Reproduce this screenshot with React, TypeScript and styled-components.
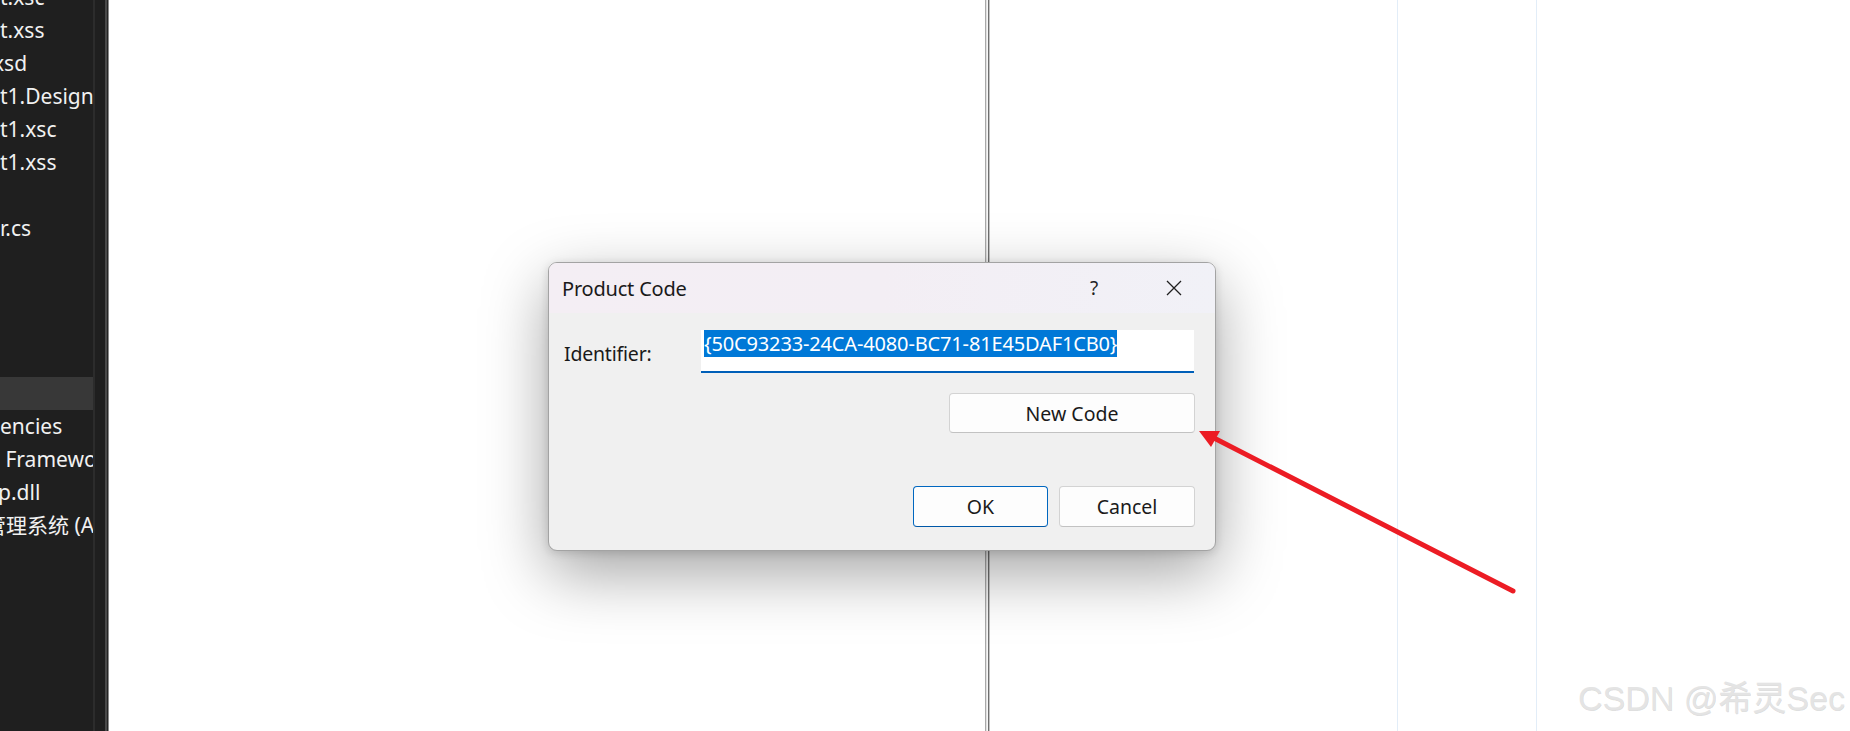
import React from 'react';
import styled, { createGlobalStyle } from 'styled-components';

const GlobalStyle = createGlobalStyle`
  html, body {
    margin: 0;
    padding: 0;
    background: #ffffff;
    overflow: hidden;
  }
`;

const Screen = styled.div`
  position: relative;
  display: flex;
  width: 1850px;
  height: 731px;
  overflow: hidden;
  background: #ffffff;
  font-family: "Noto Sans", "Noto Sans CJK SC", sans-serif;
`;

/* ---------- solution explorer strip on the left ---------- */

const Sidebar = styled.div`
  display: flex;
  flex-shrink: 0;
  height: 100%;
  background: #1f1f1f;
`;

const TreePane = styled.div`
  width: 93px;
  overflow: hidden;
  display: flex;
  flex-direction: column;
  margin-top: -19px;
`;

const TreeRow = styled.div<{ $active?: boolean; $shift?: number }>`
  height: 33px;
  line-height: 33px;
  flex-shrink: 0;
  white-space: nowrap;
  font-size: 21px;
  color: #f1f1f1;
  background: ${p => (p.$active ? '#383838' : 'transparent')};
  text-indent: ${p => p.$shift ?? 0}px;
`;

const Strip = styled.div<{ $w: number; $c: string }>`
  width: ${p => p.$w}px;
  background: ${p => p.$c};
`;

/* ---------- designer canvas ---------- */

const Canvas = styled.div`
  flex: 1;
  display: flex;
  height: 100%;
`;

const Blank = styled.div<{ $w?: number }>`
  ${p => (p.$w ? `width: ${p.$w}px; flex-shrink: 0;` : 'flex: 1;')}
`;

const Rule = styled.div<{ $c: string }>`
  width: 1px;
  flex-shrink: 0;
  background: ${p => p.$c};
`;

/* ---------- dialog ---------- */

const Dialog = styled.div`
  position: absolute;
  left: 548px;
  top: 262px;
  width: 668px;
  height: 289px;
  box-sizing: border-box;
  border: 1px solid #a3a3a3;
  border-radius: 9px;
  overflow: hidden;
  background: #f0f0f0;
  box-shadow: 0 22px 64px rgba(0, 0, 0, 0.36), 0 2px 10px rgba(0, 0, 0, 0.14);
  display: flex;
  flex-direction: column;
  color: #1a1a1a;
`;

const TitleBar = styled.div`
  height: 50px;
  flex-shrink: 0;
  display: flex;
  align-items: center;
  padding-left: 13px;
  background: linear-gradient(90deg, #f4eef4 0%, #f3eef4 50%, #f1f1f7 100%);
`;

const Title = styled.div`
  flex: 1;
  font-size: 20px;
  letter-spacing: -0.2px;
`;

const CaptionButton = styled.div<{ $w: number }>`
  width: ${p => p.$w}px;
  height: 50px;
  display: flex;
  align-items: center;
  justify-content: center;
  font-size: 19px;
  color: #1f1f1f;
`;

const Body = styled.div`
  flex: 1;
  display: flex;
  flex-direction: column;
  padding: 17px 20px 23px 15px;
`;

const FieldRow = styled.div`
  display: flex;
  align-items: center;
`;

const Label = styled.div`
  width: 137px;
  flex-shrink: 0;
  font-size: 19.5px;
  letter-spacing: -0.2px;
  padding-top: 4px;
`;

const TextBox = styled.div`
  width: 493px;
  height: 43px;
  box-sizing: border-box;
  background: #ffffff;
  border-bottom: 2px solid #005fb8;
  padding: 0 0 0 3px;
  display: flex;
  align-items: flex-start;
`;

const Selected = styled.span`
  background: #0078d7;
  color: #ffffff;
  font-size: 20px;
  line-height: 27px;
  height: 27px;
  letter-spacing: -0.15px;
  white-space: nowrap;
`;

const ButtonRow = styled.div<{ $top: number }>`
  display: flex;
  justify-content: flex-end;
  gap: 11px;
  margin-top: ${p => p.$top}px;
`;

const Button = styled.div<{ $w: number; $primary?: boolean }>`
  width: ${p => p.$w}px;
  height: ${p => (p.$primary !== undefined ? 41 : 40)}px;
  box-sizing: border-box;
  display: flex;
  align-items: center;
  justify-content: center;
  background: #fdfdfd;
  border: 1px solid ${p => (p.$primary ? '#0067c0' : '#d3d3d3')};
  border-bottom-color: ${p => (p.$primary ? '#0058a8' : '#c2c2c2')};
  border-radius: 4px;
  font-size: 19.5px;
  color: #1a1a1a;
`;

/* ---------- overlays ---------- */

const Overlay = styled.svg`
  position: absolute;
  left: 0;
  top: 0;
  pointer-events: none;
`;

const Watermark = styled.div`
  position: absolute;
  left: 1578px;
  top: 678px;
  font-family: "Liberation Sans", "Noto Sans CJK SC", sans-serif;
  font-size: 34px;
  line-height: 40px;
  color: #e4e4e4;
  text-shadow: 0.5px 0.5px 0 rgba(0, 0, 0, 0.14);
  white-space: nowrap;
`;

const treeRows: { text: string; shift?: number; active?: boolean }[] = [
  { text: 't.xsc' },
  { text: 't.xss' },
  { text: 'xsd', shift: -7 },
  { text: 't1.Designer.cs' },
  { text: 't1.xsc' },
  { text: 't1.xss' },
  { text: '' },
  { text: 'r.cs' },
  { text: '' },
  { text: '' },
  { text: '' },
  { text: '' },
  { text: '', active: true },
  { text: 'encies' },
  { text: '\u00a0Framework' },
  { text: 'p.dll', shift: -2 },
  { text: '管理系统 (ASP.NET)', shift: -15 },
  { text: '' },
  { text: '' },
  { text: '' },
  { text: '' },
  { text: '' },
  { text: '' },
];

const App: React.FC = () => {
  return (
    <>
      <GlobalStyle />
      <Screen>
        <Sidebar>
          <TreePane>
            {treeRows.map((r, i) => (
              <TreeRow key={i} $active={r.active} $shift={r.shift}>
                {r.text}
              </TreeRow>
            ))}
          </TreePane>
          <Strip $w={2} $c="#2c2c2c" />
          <Strip $w={10} $c="#1f1f1f" />
          <Strip $w={2} $c="#4a4a4a" />
          <Strip $w={1} $c="#262626" />
          <Strip $w={1} $c="#8a8a8a" />
        </Sidebar>

        <Canvas>
          <Blank $w={876} />
          <Rule $c="#a9a9a9" />
          <Rule $c="#e2e2e2" />
          <Rule $c="#f7f7f7" />
          <Rule $c="#6f6f6f" />
          <Rule $c="#c4c4c4" />
          <Blank $w={407} />
          <Rule $c="#e2edf8" />
          <Blank $w={138} />
          <Rule $c="#e2edf8" />
          <Blank />
        </Canvas>

        <Dialog>
          <TitleBar>
            <Title>Product Code</Title>
            <CaptionButton $w={78}>?</CaptionButton>
            <CaptionButton $w={82}>
              <svg width="16" height="16" viewBox="0 0 16 16">
                <path d="M1 1 L15 15 M15 1 L1 15" stroke="#1f1f1f" strokeWidth="1.3" fill="none" />
              </svg>
            </CaptionButton>
          </TitleBar>
          <Body>
            <FieldRow>
              <Label>Identifier:</Label>
              <TextBox>
                <Selected>{'{50C93233-24CA-4080-BC71-81E45DAF1CB0}'}</Selected>
              </TextBox>
            </FieldRow>
            <ButtonRow $top={20}>
              <Button $w={246}>New Code</Button>
            </ButtonRow>
            <ButtonRow $top={53}>
              <Button $w={135} $primary>OK</Button>
              <Button $w={136} $primary={false}>Cancel</Button>
            </ButtonRow>
          </Body>
        </Dialog>

        <Overlay width="1850" height="731" viewBox="0 0 1850 731">
          <line x1="1513" y1="591" x2="1212" y2="437" stroke="#ec1c24" strokeWidth="5" strokeLinecap="round" />
          <polygon points="1199,431 1220,431 1211,447" fill="#ec1c24" />
        </Overlay>

        <Watermark>CSDN @希灵Sec</Watermark>
      </Screen>
    </>
  );
};

export default App;
